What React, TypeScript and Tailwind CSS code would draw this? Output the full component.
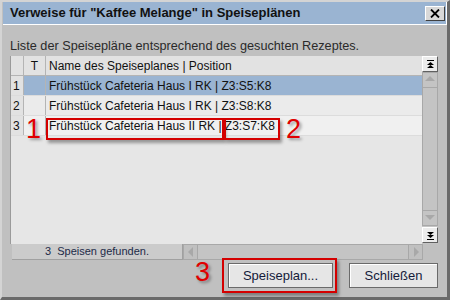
import React from 'react';

const rows = [
  { n: '1', name: 'Frühstück Cafeteria Haus I RK | Z3:S5:K8', selected: true },
  { n: '2', name: 'Frühstück Cafeteria Haus I RK | Z3:S8:K8', selected: false },
  { n: '3', name: 'Frühstück Cafeteria Haus II RK | Z3:S7:K8', selected: false },
];

const font = { fontFamily: '"Liberation Sans", Arial, sans-serif' };

const Arrow = ({ dir, double = false, dim = false }: { dir: 'up' | 'down' | 'left' | 'right'; double?: boolean; dim?: boolean }) => {
  const c = dim ? '#a8a8a8' : '#000';
  if (double) {
    return (
      <svg width="9" height="9" viewBox="0 0 9 9">
        {dir === 'up' ? (
          <>
            <rect x="1" y="0" width="7" height="1" fill={c} />
            <path d="M4.5 2 L8 5 L1 5 Z" fill={c} />
            <path d="M4.5 5 L8 8 L1 8 Z" fill={c} />
          </>
        ) : (
          <>
            <path d="M1 1 L8 1 L4.5 4 Z" fill={c} />
            <path d="M1 4 L8 4 L4.5 7 Z" fill={c} />
            <rect x="1" y="8" width="7" height="1" fill={c} />
          </>
        )}
      </svg>
    );
  }
  const d =
    dir === 'up' ? 'M1 7 L11 7 L6 2 Z' : dir === 'down' ? 'M1 3 L11 3 L6 8 Z' : dir === 'left' ? 'M8 1 L8 11 L3 6 Z' : 'M4 1 L4 11 L9 6 Z';
  return (
    <svg width="12" height="12" viewBox="0 0 12 12">
      <path d={d} fill={c} />
    </svg>
  );
};

const RedBox = ({ className }: { className: string }) => (
  <div className={`absolute border-2 border-[#d40000] shadow-[2px_3px_3px_rgba(0,0,0,0.35)] ${className}`} />
);

const RedNum = ({ n, className }: { n: string; className: string }) => (
  <div className={`absolute text-[#e00000] text-[27px] leading-none [text-shadow:2px_2px_3px_rgba(0,0,0,0.35)] ${className}`} style={font}>
    {n}
  </div>
);

export default function App() {
  return (
    <div className="relative w-[450px] h-[300px] bg-[#c0c0c0] overflow-hidden" style={font}>
      <div className="absolute inset-0 border-l-2 border-t-2 border-[#d4d4d4] border-r-[3px] border-r-[#6a6a6a] border-b-[3px] border-b-[#6a6a6a] pointer-events-none" />

      {/* title bar */}
      <div className="ml-[3px] mr-[3px] pt-[2px]">
        <div className="h-[23px] bg-[#9ab4d2] border-r border-b border-white flex items-center justify-between pl-[7px] pr-[1px]">
          <span className="text-[13px] font-bold text-[#111]">Verweise für "Kaffee Melange" in Speiseplänen</span>
          <div className="w-[20px] h-[15px] bg-[#d8d8d8] border border-t-white border-l-white border-r-[#404040] border-b-[#404040] flex items-center justify-center">
            <svg width="10" height="9" viewBox="0 0 10 9">
              <path d="M1 0.5 L9 8.5 M9 0.5 L1 8.5" stroke="#000" strokeWidth="1.8" />
            </svg>
          </div>
        </div>
      </div>

      <div className="pl-[10px] pt-[13px] h-[31px] text-[12.7px] text-[#2a2a2a] leading-[16px]">
        Liste der Speisepläne entsprechend des gesuchten Rezeptes.
      </div>

      {/* table */}
      <div className="ml-[10px] w-[428px] h-[204px] flex flex-col">
        <div className="flex h-[188px]">
          <div className="w-[412px] bg-[#e6e6e6] border-l border-[#9a9a9a] flex flex-col text-[12px] text-[#111]">
            <div className="flex h-[20px] bg-[#e2e2e2] border-b border-[#b4b4b4]">
              <div className="w-[13px] border-r border-[#b4b4b4]" />
              <div className="w-[22px] border-r border-[#b4b4b4] flex items-center justify-center">T</div>
              <div className="flex-1 flex items-center pl-[3px]">Name des Speiseplanes | Position</div>
            </div>
            {rows.map((r) => (
              <div key={r.n} className={`flex h-[20px] border-b border-[#dcdcdc] ${r.selected ? 'bg-[#9ab4d2]' : r.n === '3' ? 'bg-[#f0f0f0]' : 'bg-[#ebebeb]'}`}>
                <div className="w-[13px] bg-[#e2e2e2] border-r border-[#b4b4b4] flex items-center pl-[2px]">{r.n}</div>
                <div className="w-[22px] border-r border-[#b4b4b4]" />
                <div className="flex-1 flex items-center pl-[3px]">{r.name}</div>
              </div>
            ))}
          </div>
          {/* vertical scrollbar */}
          <div className="w-[16px] bg-[#c4c4c4] flex flex-col">
            <div className="h-[16px] bg-[#ececec] border border-t-white border-l-white border-r-[#606060] border-b-[#606060] flex items-center justify-center">
              <Arrow dir="up" double />
            </div>
            <div className="h-[16px] border border-[#a8a8a8] flex items-center justify-center">
              <Arrow dir="up" dim />
            </div>
            <div className="flex-1 border-x border-[#a8a8a8]" />
            <div className="h-[16px] border border-[#a8a8a8] flex items-center justify-center">
              <Arrow dir="down" dim />
            </div>
            <div className="h-[16px] mt-[1px] mb-[1px] bg-[#ececec] border border-t-white border-l-white border-r-[#606060] border-b-[#606060] flex items-center justify-center">
              <Arrow dir="down" double />
            </div>
          </div>
        </div>
        {/* status / horizontal scrollbar */}
        <div className="flex h-[16px]">
          <div className="w-[171px] ml-[2px] bg-[#cbcbcb] border-r border-b border-[#a0a0a0] text-[11px] text-[#1c2a48] flex items-center pl-[33px]">
            3&nbsp; Speisen gefunden.
          </div>
          <div className="w-[15px] border border-[#a8a8a8] flex items-center justify-center">
            <Arrow dir="left" dim />
          </div>
          <div className="w-[210px] border-y border-[#a8a8a8] bg-[#c4c4c4]" />
          <div className="w-[15px] border border-[#a8a8a8] flex items-center justify-center">
            <Arrow dir="right" dim />
          </div>
        </div>
      </div>

      {/* buttons */}
      <div className="flex justify-end gap-[16px] pr-[12px] pt-[3px]">
        <button className="w-[105px] h-[25px] bg-[#e6e6e6] border border-[#6a6a6a] shadow-[inset_1px_1px_0_#fff] text-[13px] text-[#141a3a]">
          Speiseplan...
        </button>
        <button className="w-[89px] h-[25px] bg-[#e6e6e6] border border-[#6a6a6a] shadow-[inset_1px_1px_0_#fff] text-[13px] text-[#141a3a]">
          Schließen
        </button>
      </div>

      {/* annotations */}
      <RedBox className="left-[46px] top-[118px] w-[178px] h-[22px]" />
      <RedBox className="left-[224px] top-[118px] w-[56px] h-[22px]" />
      <RedBox className="left-[222px] top-[258px] w-[115px] h-[35px]" />
      <RedNum n="1" className="left-[26px] top-[116px]" />
      <RedNum n="2" className="left-[286px] top-[116px]" />
      <RedNum n="3" className="left-[195px] top-[259px]" />
    </div>
  );
}
